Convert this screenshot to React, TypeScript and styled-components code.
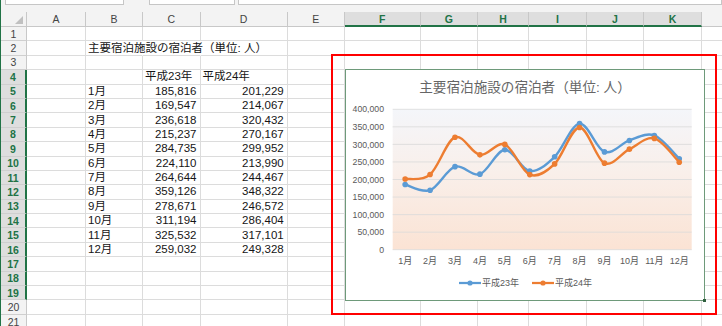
import React from "react";
import styled, { createGlobalStyle } from "styled-components";

const GREEN = "#217346";
const GRID = "#dcdcdc";
const sheetFont = `"Liberation Sans", "Noto Sans CJK JP", sans-serif`;
const headFont = `"Liberation Sans", Arial, sans-serif`;

const GlobalStyle = createGlobalStyle`
  html, body { margin: 0; padding: 0; background: #fff; overflow: hidden; }
  #root { width: 722px; height: 326px; }
`;

const COL_WIDTHS = [26, 59, 57, 57.5, 87.2, 57.3, 75.7, 57.3, 51, 58, 57, 58, 40];
const COL_NAMES = ["A", "B", "C", "D", "E", "F", "G", "H", "I", "J", "K", ""];
const SELECTED_COLS = new Set(["F", "G", "H", "I", "J", "K"]);
const ROW_COUNT = 22;

const h23 = [185816, 169547, 236618, 215237, 284735, 224110, 264644, 359126, 278671, 311194, 325532, 259032];
const h24 = [201229, 214067, 320432, 270167, 299952, 213990, 244467, 348322, 246572, 286404, 317101, 249328];
const months = h23.map((_, i) => `${i + 1}月`);
const fmt = (n: number) => n.toLocaleString("en-US");

type CellData = { text: string; align?: "left" | "right"; spill?: boolean };

const cellData: Record<string, CellData> = {
  "2-B": { text: "主要宿泊施設の宿泊者（単位: 人）", spill: true },
  "2-C": { text: "", spill: true },
  "4-C": { text: "平成23年" },
  "4-D": { text: "平成24年" },
};
months.forEach((m, i) => {
  const r = i + 5;
  cellData[`${r}-B`] = { text: m };
  cellData[`${r}-C`] = { text: fmt(h23[i]), align: "right" };
  cellData[`${r}-D`] = { text: fmt(h24[i]), align: "right" };
});

/* ---------- window chrome ---------- */

const Window = styled.div`
  width: 722px;
  height: 326px;
  overflow: hidden;
  box-sizing: border-box;
  border-left: 1px solid ${GREEN};
  background: #fff;
  display: flex;
  flex-direction: column;
`;

const FormulaStrip = styled.div`
  height: 12px;
  flex: none;
  background: #f3f3f3;
  display: flex;
  align-items: flex-start;
  padding-left: 4px;
`;

const StripBox = styled.div<{ $w: number; $ml: number }>`
  box-sizing: border-box;
  height: 5px;
  width: ${({ $w }) => $w}px;
  margin-left: ${({ $ml }) => $ml}px;
  background: #fff;
  border: 1px solid #c6c6c6;
  border-top: none;
`;

const SheetArea = styled.div`
  position: relative;
  flex: 1;
  overflow: hidden;
`;

const Grid = styled.div`
  display: grid;
  grid-template-columns: ${COL_WIDTHS.map((w) => `${w}px`).join(" ")};
  grid-template-rows: 15px repeat(${ROW_COUNT}, 14.4px);
`;

const Corner = styled.div`
  position: relative;
  box-sizing: border-box;
  background: #f3f3f3;
  border-right: 1px solid #c8c8c8;
  border-bottom: 1px solid #c8c8c8;
  &::after {
    content: "";
    position: absolute;
    right: 3px;
    bottom: 2px;
    width: 0;
    height: 0;
    border-left: 8px solid transparent;
    border-bottom: 8px solid #c0c0c0;
  }
`;

const ColHeader = styled.div<{ $selected?: boolean }>`
  box-sizing: border-box;
  display: flex;
  align-items: center;
  justify-content: center;
  font: ${({ $selected }) => ($selected ? 700 : 400)} 10.5px ${headFont};
  color: ${({ $selected }) => ($selected ? GREEN : "#444")};
  background: ${({ $selected }) => ($selected ? "#dedede" : "#f3f3f3")};
  border-right: 1px solid #c8c8c8;
  border-bottom: ${({ $selected }) => ($selected ? `2px solid ${GREEN}` : "1px solid #c8c8c8")};
`;

const RowHeader = styled.div<{ $selected?: boolean }>`
  box-sizing: border-box;
  display: flex;
  align-items: center;
  justify-content: center;
  font: ${({ $selected }) => ($selected ? 700 : 400)} 10.5px ${headFont};
  color: ${({ $selected }) => ($selected ? GREEN : "#444")};
  background: ${({ $selected }) => ($selected ? "#dedede" : "#f3f3f3")};
  border-bottom: 1px solid #cfcfcf;
  border-right: ${({ $selected }) => ($selected ? `2px solid ${GREEN}` : "1px solid #c8c8c8")};
`;

const Cell = styled.div<{ $align?: "left" | "right"; $spill?: boolean }>`
  box-sizing: border-box;
  min-width: 0;
  display: flex;
  align-items: center;
  justify-content: ${({ $align }) => ($align === "right" ? "flex-end" : "flex-start")};
  padding: 0 3px 0 2px;
  border-right: 1px solid ${({ $spill }) => ($spill ? "transparent" : GRID)};
  border-bottom: 1px solid ${GRID};
  font: 400 11.5px/13px ${sheetFont};
  color: #151515;
  white-space: nowrap;
  overflow: visible;
`;

const CellText = styled.span`
  flex: none;
`;

/* ---------- chart ---------- */

const Highlight = styled.div`
  position: absolute;
  left: 330px;
  top: 42px;
  width: 386px;
  height: 261px;
  box-sizing: border-box;
  border: 2px solid #ff0000;
  pointer-events: none;
`;

const ChartFrame = styled.div`
  position: absolute;
  left: 344px;
  top: 57px;
  width: 360px;
  height: 232px;
  box-sizing: border-box;
  background: #fff;
  border: 1px solid #6e9a7a;
  display: flex;
  flex-direction: column;
`;

const ChartTitle = styled.div`
  height: 36px;
  flex: none;
  text-align: center;
  font: 400 13.6px/36px ${sheetFont};
  color: #666;
  white-space: nowrap;
`;

const PlotSvg = styled.svg`
  display: block;
  flex: none;
  overflow: visible;
`;

const Legend = styled.div`
  height: 30px;
  flex: none;
  display: flex;
  align-items: center;
  justify-content: center;
  gap: 13px;
  padding-left: 1px;
`;

const LegendItem = styled.div`
  display: flex;
  align-items: center;
  gap: 1px;
  font: 400 9px/12px ${sheetFont};
  color: #595959;
`;

const Handle = styled.div`
  position: absolute;
  right: -2px;
  bottom: -2px;
  width: 3px;
  height: 3px;
  background: #2f5f3e;
`;

const PLOT = { left: 46.7, right: 345.7, top: 3.3, bottom: 143.7 };
const MAX = 400000;
const yOf = (v: number) => PLOT.bottom - (v / MAX) * (PLOT.bottom - PLOT.top);
const catW = (PLOT.right - PLOT.left) / 12;
const xOf = (i: number) => PLOT.left + catW * (i + 0.5);

function smoothPath(values: number[]) {
  const pts = values.map((v, i) => [xOf(i), yOf(v)]);
  let d = `M${pts[0][0].toFixed(2)},${pts[0][1].toFixed(2)}`;
  for (let i = 0; i < pts.length - 1; i++) {
    const p0 = pts[i - 1] || pts[i];
    const p1 = pts[i];
    const p2 = pts[i + 1];
    const p3 = pts[i + 2] || p2;
    const c1x = p1[0] + (p2[0] - p0[0]) / 6;
    const c1y = p1[1] + (p2[1] - p0[1]) / 6;
    const c2x = p2[0] - (p3[0] - p1[0]) / 6;
    const c2y = p2[1] - (p3[1] - p1[1]) / 6;
    d += ` C${c1x.toFixed(2)},${c1y.toFixed(2)} ${c2x.toFixed(2)},${c2y.toFixed(2)} ${p2[0].toFixed(2)},${p2[1].toFixed(2)}`;
  }
  return d;
}

const SERIES = [
  { name: "平成23年", color: "#5b9bd5", values: h23 },
  { name: "平成24年", color: "#ed7d31", values: h24 },
];

const LegendSwatch: React.FC<{ color: string }> = ({ color }) => (
  <svg width="22" height="8" viewBox="0 0 22 8">
    <line x1="0" y1="4" x2="22" y2="4" stroke={color} strokeWidth="2.25" />
    <circle cx="11" cy="4" r="2.6" fill={color} />
  </svg>
);

const Chart: React.FC = () => {
  const ticks = [0, 50000, 100000, 150000, 200000, 250000, 300000, 350000, 400000];
  return (
    <ChartFrame>
      <ChartTitle>主要宿泊施設の宿泊者（単位: 人）</ChartTitle>
      <PlotSvg width="358" height="162" viewBox="0 0 358 162">
        <defs>
          <linearGradient id="plotBg" x1="0" y1="0" x2="0" y2="1">
            <stop offset="0" stopColor="#f4f6fa" />
            <stop offset="0.45" stopColor="#f9efea" />
            <stop offset="1" stopColor="#fbe3d4" />
          </linearGradient>
        </defs>
        <rect
          x={PLOT.left}
          y={PLOT.top}
          width={PLOT.right - PLOT.left}
          height={PLOT.bottom - PLOT.top}
          fill="url(#plotBg)"
        />
        {ticks.map((t) => (
          <g key={t}>
            <line
              x1={PLOT.left}
              x2={PLOT.right}
              y1={yOf(t)}
              y2={yOf(t)}
              stroke="#d9d9d9"
              strokeWidth="0.8"
            />
            <text
              x={38}
              y={yOf(t) + 3.1}
              textAnchor="end"
              fontSize="8.7"
              fill="#595959"
              fontFamily={sheetFont}
            >
              {fmt(t)}
            </text>
          </g>
        ))}
        {months.map((m, i) => (
          <text
            key={m}
            x={xOf(i)}
            y={158}
            textAnchor="middle"
            fontSize="9"
            fill="#595959"
            fontFamily={sheetFont}
          >
            {m}
          </text>
        ))}
        {SERIES.map((s) => (
          <g key={s.name}>
            <path
              d={smoothPath(s.values)}
              fill="none"
              stroke={s.color}
              strokeWidth="2.4"
              strokeLinejoin="round"
              strokeLinecap="round"
            />
            {s.values.map((v, i) => (
              <circle key={i} cx={xOf(i)} cy={yOf(v)} r="2.8" fill={s.color} />
            ))}
          </g>
        ))}
      </PlotSvg>
      <Legend>
        {SERIES.map((s) => (
          <LegendItem key={s.name}>
            <LegendSwatch color={s.color} />
            <span>{s.name}</span>
          </LegendItem>
        ))}
      </Legend>
      <Handle />
    </ChartFrame>
  );
};

const App: React.FC = () => {
  const rows = Array.from({ length: ROW_COUNT }, (_, i) => i + 1);
  return (
    <>
      <GlobalStyle />
      <Window>
        <FormulaStrip>
          <StripBox $w={120} $ml={0} />
          <StripBox $w={87} $ml={25} />
          <StripBox $w={490} $ml={3} />
        </FormulaStrip>
        <SheetArea>
          <Grid>
            <Corner />
            {COL_NAMES.map((c, i) => (
              <ColHeader key={`h${i}`} $selected={SELECTED_COLS.has(c)}>
                {c}
              </ColHeader>
            ))}
            {rows.map((r) => (
              <React.Fragment key={r}>
                <RowHeader $selected={r >= 4 && r <= 19}>{r}</RowHeader>
                {COL_NAMES.map((c, ci) => {
                  const d = cellData[`${r}-${c}`];
                  return (
                    <Cell key={ci} $align={d?.align} $spill={d?.spill}>
                      {d?.text ? <CellText>{d.text}</CellText> : null}
                    </Cell>
                  );
                })}
              </React.Fragment>
            ))}
          </Grid>
          <Highlight />
          <Chart />
        </SheetArea>
      </Window>
    </>
  );
};

export default App;
